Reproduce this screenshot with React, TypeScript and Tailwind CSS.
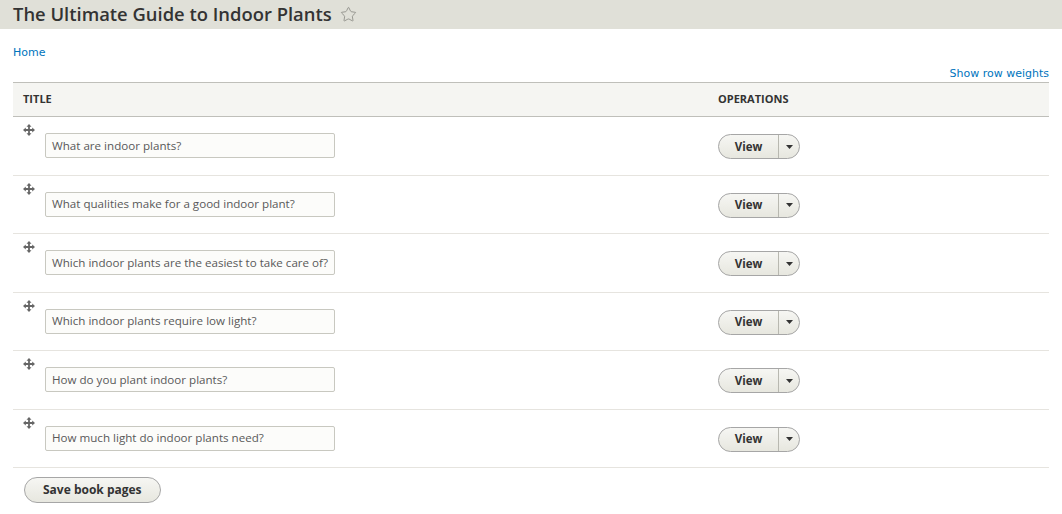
import { Star } from 'lucide-react';

const pages = [
  'What are indoor plants?',
  'What qualities make for a good indoor plant?',
  'Which indoor plants are the easiest to take care of?',
  'Which indoor plants require low light?',
  'How do you plant indoor plants?',
  'How much light do indoor plants need?',
];

function DragHandle() {
  return (
    <svg width="12" height="12" viewBox="0 0 12 12" className="text-[#666]" fill="currentColor">
      <path d="M6 0 L8.5 2.8 H6.9 V5.1 H9.2 V3.5 L12 6 L9.2 8.5 V6.9 H6.9 V9.2 H8.5 L6 12 L3.5 9.2 H5.1 V6.9 H2.8 V8.5 L0 6 L2.8 3.5 V5.1 H5.1 V2.8 H3.5 Z" />
    </svg>
  );
}

function ViewButton() {
  return (
    <div
      className="flex h-[25px] w-[82px] items-stretch rounded-full border border-[#a6a6a6] bg-gradient-to-b from-[#f6f6f3] to-[#e7e7df] text-[11.5px] font-bold text-[#333]"
      style={{ fontFamily: '"Open Sans", sans-serif' }}
    >
      <span className="flex flex-1 items-center justify-center">View</span>
      <span className="flex w-[21px] items-center justify-center border-l border-[#b8b8b0]">
        <svg width="7" height="4" viewBox="0 0 7 4" fill="#333">
          <path d="M0 0 H7 L3.5 4 Z" />
        </svg>
      </span>
    </div>
  );
}

export default function App() {
  return (
    <div className="min-h-screen bg-white text-[#333]" style={{ fontFamily: '"DejaVu Sans", sans-serif' }}>
      <div className="flex h-[29px] items-center gap-[8px] bg-[#e0e0d8] px-[13px]">
        <h1 className="text-[18.4px] leading-none font-semibold text-[#333]" style={{ fontFamily: '"Open Sans", sans-serif' }}>
          The Ultimate Guide to Indoor Plants
        </h1>
        <Star className="h-[17px] w-[17px] text-[#8a8a84]" strokeWidth={1.2} />
      </div>

      <div className="px-[13px] pt-[16px]">
        <div className="text-[11px] leading-[16px]">
          <a className="text-[#0074bd]">Home</a>
        </div>

        <div className="mt-[5px] flex justify-end text-[11px] leading-[16px]">
          <a className="text-[#0074bd]">Show row weights</a>
        </div>

        <table className="mt-0 w-full border-collapse text-left">
          <thead>
            <tr
              className="border-y border-[#bfbfba] bg-[#f5f5f2]"
              style={{ fontFamily: '"Open Sans", sans-serif' }}
            >
              <th className="h-[34px] w-[695px] px-[10px] text-[11px] font-bold uppercase text-[#333]">Title</th>
              <th className="h-[34px] px-[10px] text-[11px] font-bold uppercase text-[#333]">Operations</th>
            </tr>
          </thead>
          <tbody>
            {pages.map((p) => (
              <tr key={p} className="border-b border-[#e6e4df]">
                <td className="h-[58.5px] px-[10px] align-top">
                  <div className="flex items-start gap-[10px] pt-[7px]">
                    <DragHandle />
                    <div
                      className="mt-[9px] flex h-[25px] w-[290px] items-center whitespace-nowrap rounded-[2px] border border-[#c8c8c0] bg-[#fcfcfa] pl-[6px] text-[11.6px] text-[#595959]"
                      style={{ fontFamily: '"Open Sans", sans-serif' }}
                    >
                      {p}
                    </div>
                  </div>
                </td>
                <td className="px-[10px] align-top">
                  <div className="pt-[17px]">
                    <ViewButton />
                  </div>
                </td>
              </tr>
            ))}
          </tbody>
        </table>

        <div className="mt-[9px] pl-[11px]">
          <button
            className="h-[26px] rounded-full border border-[#a6a6a6] bg-gradient-to-b from-[#f6f6f3] to-[#e7e7df] px-[18px] text-[12px] font-bold text-[#333]"
            style={{ fontFamily: '"Open Sans", sans-serif' }}
          >
            Save book pages
          </button>
        </div>
      </div>
    </div>
  );
}
